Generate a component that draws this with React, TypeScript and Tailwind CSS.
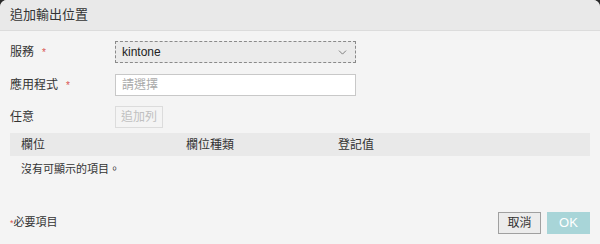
import { ChevronDown } from "lucide-react";

const font = "font-['Liberation_Sans','Noto_Sans_CJK_TC',sans-serif]";

function Label({ text, required }: { text: string; required?: boolean }) {
  return (
    <div className="w-[105px] shrink-0 flex items-center">
      <span>{text}</span>
      {required && <span className="ml-2 text-[#d9534f] text-[10px]">*</span>}
    </div>
  );
}

export default function App() {
  return (
    <div className={`w-[600px] h-[244px] bg-[#2a2a2a] ${font} text-[12px] text-[#333]`}>
      <div className="h-full flex flex-col bg-[#f4f4f4] rounded-tl-[7px] rounded-tr-[7px] overflow-hidden">
        <div className="h-[31px] shrink-0 bg-[#e9e9e9] border-b border-[#dcdcdc] flex items-center px-[10px] text-[13px] text-[#333]">
          追加輸出位置
        </div>

        <div className="flex-1 flex flex-col px-[10px] pt-[10px]">
          <div className="flex items-center h-[22px]">
            <Label text="服務" required />
            <div className="w-[241px] h-[22px] bg-[#ebebeb] border border-dashed border-[#8a8a8a] flex items-center justify-between pl-[6px] pr-[6px] text-[#222]">
              <span>kintone</span>
              <ChevronDown size={13} strokeWidth={1.5} className="text-[#666]" />
            </div>
          </div>

          <div className="flex items-center h-[22px] mt-[11px]">
            <Label text="應用程式" required />
            <div className="w-[241px] h-[22px] bg-white border border-[#c8c8c8] flex items-center pl-[6px] text-[#aaa]">
              請選擇
            </div>
          </div>

          <div className="flex items-center h-[22px] mt-[10px]">
            <Label text="任意" />
            <button className="h-[22px] px-[5px] border border-[#dcdcdc] bg-[#f4f4f4] text-[#c0c0c0] text-[12px]" disabled>
              追加列
            </button>
          </div>

          <div className="mt-[5px] h-[23px] bg-[#e9e9e9] grid grid-cols-[165px_152px_1fr] items-center pl-[11px]">
            <span>欄位</span>
            <span>欄位種類</span>
            <span>登記值</span>
          </div>
          <div className="pl-[11px] pt-[5px] text-[11px]">沒有可顯示的項目。</div>

          <div className="mt-auto mb-[10px] flex items-end justify-between">
            <div className="pb-[4px] text-[11px]">
              <span className="text-[#d9534f] text-[9px]">*</span>必要項目
            </div>
            <div className="flex gap-[6px]">
              <button className="w-[43px] h-[22px] border border-[#a0a0a0] bg-[#ececec] text-[#333] text-[12px]">取消</button>
              <button className="w-[43px] h-[22px] bg-[#a8d5d8] text-white text-[13px]">OK</button>
            </div>
          </div>
        </div>
      </div>
    </div>
  );
}
